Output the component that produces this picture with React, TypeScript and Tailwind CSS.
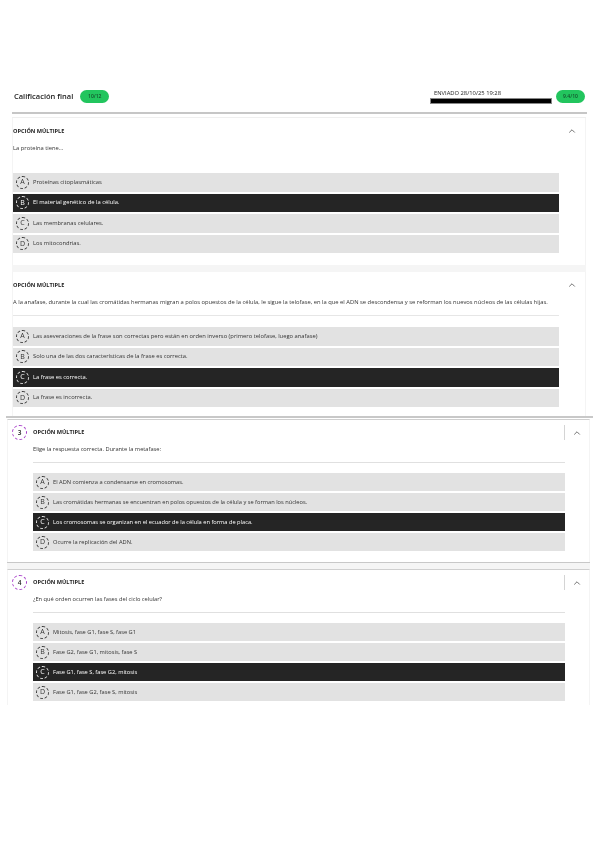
import React from 'react';
import { ChevronUp } from 'lucide-react';

type Question = {
  number?: number;
  text: string;
  options: string[];
  selected: number;
  hideRule?: boolean;
};

const LETTERS = ['A', 'B', 'C', 'D'];

const questions: Question[] = [
  {
    text: 'La proteína tiene...',
    hideRule: true,
    selected: 1,
    options: [
      'Proteínas citoplasmáticas',
      'El material genético de la célula.',
      'Las membranas celulares.',
      'Los mitocondrias.',
    ],
  },
  {
    text: 'A la anafase, durante la cual las cromátidas hermanas migran a polos opuestos de la célula, le sigue la telofase, en la que el ADN se descondensa y se reforman los nuevos núcleos de las células hijas.',
    selected: 2,
    options: [
      'Las aseveraciones de la frase son correctas pero están en orden inverso (primero telofase, luego anafase)',
      'Solo una de las dos características de la frase es correcta.',
      'La frase es correcta.',
      'La frase es incorrecta.',
    ],
  },
  {
    number: 3,
    text: 'Elige la respuesta correcta. Durante la metafase:',
    selected: 2,
    options: [
      'El ADN comienza a condensarse en cromosomas.',
      'Las cromátidas hermanas se encuentran en polos opuestos de la célula y se forman los núcleos.',
      'Los cromosomas se organizan en el ecuador de la célula en forma de placa.',
      'Ocurre la replicación del ADN.',
    ],
  },
  {
    number: 4,
    text: '¿En qué orden ocurren las fases del ciclo celular?',
    selected: 2,
    options: [
      'Mitosis, fase G1, fase S, fase G1',
      'Fase G2, fase G1, mitosis, fase S',
      'Fase G1, fase S, fase G2, mitosis',
      'Fase G1, fase G2, fase S, mitosis',
    ],
  },
];

function ScorePill({ label }: { label: string }) {
  return (
    <span className="flex h-[13px] w-[29px] items-center justify-center rounded-full bg-[#22c55e] text-[5px] font-semibold text-[#14532d]">
      {label}
    </span>
  );
}

function Options({ question, rowClass }: { question: Question; rowClass: string }) {
  return (
    <div className="flex flex-col gap-[2px]">
      {question.options.map((option, i) => {
        const active = i === question.selected;
        return (
          <div
            key={option}
            className={`flex items-center gap-[4px] pl-[3px] ${rowClass} ${
              active ? 'bg-[#252525] text-white' : 'bg-[#e2e2e2] text-[#333333]'
            }`}
          >
            <span
              className={`flex h-[13px] w-[13px] shrink-0 items-center justify-center rounded-full border border-dashed text-[7px] font-medium ${
                active ? 'border-[#eeeeee]' : 'border-[#333333]'
              }`}
            >
              {LETTERS[i]}
            </span>
            <span className="whitespace-nowrap">{option}</span>
          </div>
        );
      })}
    </div>
  );
}

function PlainCard({ question, bottomClass }: { question: Question; bottomClass: string }) {
  return (
    <section className={`ml-[12px] w-[574px] border-x border-[#f4f4f4] pt-[7px] ${bottomClass}`}>
      <div className="flex h-[12px] w-[572px] items-center justify-between pr-[8px]">
        <h3 className="text-[5.6px] font-bold text-[#222222]">OPCIÓN MÚLTIPLE</h3>
        <ChevronUp size={10} strokeWidth={1.8} className="text-[#444444]" />
      </div>
      <div className="w-[546px]">
        <p className="mt-[5px] h-[12px] whitespace-nowrap text-[5.8px] leading-[12px] text-[#333333]">
          {question.text}
        </p>
        <div className={`mt-[7px] h-[1px] ${question.hideRule ? '' : 'bg-[#e6e6e6]'}`} />
        <div className="mt-[11px]">
          <Options question={question} rowClass="h-[18.5px] text-[5.8px]" />
        </div>
      </div>
    </section>
  );
}

function NumberedCard({ question }: { question: Question }) {
  return (
    <section className="ml-[7px] flex w-[583px] border-x border-t border-x-[#f4f4f4] border-t-[#cfcfcf] pl-[4px] pt-[5px]">
      <span className="flex h-[15px] w-[15px] shrink-0 items-center justify-center rounded-full border border-dashed border-[#a83ec9] text-[6.5px] font-semibold text-[#222222]">
        {question.number}
      </span>
      <div className="ml-[6px] w-[532px]">
        <div className="flex h-[15px] items-center border-r border-[#d4d4d4]">
          <h3 className="text-[5.6px] font-bold text-[#222222]">OPCIÓN MÚLTIPLE</h3>
        </div>
        <p className="mt-[3px] h-[12px] whitespace-nowrap text-[5.7px] leading-[12px] text-[#333333]">
          {question.text}
        </p>
        <div className="mt-[7px] h-[1px] bg-[#e0e0e0]" />
        <div className="mt-[10px] pb-[11px]">
          <Options question={question} rowClass="h-[18px] text-[5.7px]" />
        </div>
      </div>
      <div className="ml-[7px] flex h-[15px] items-center">
        <ChevronUp size={10} strokeWidth={1.8} className="text-[#444444]" />
      </div>
    </section>
  );
}

export default function App() {
  return (
    <div className="h-[848px] w-[600px] overflow-hidden bg-white font-['Open_Sans',sans-serif] blur-[0.45px]">
      <div className="h-[705px] overflow-hidden pt-[84px]">
        <header className="ml-[12px] w-[575px] border-b-2 border-[#c6c6c6] pb-[3px]">
          <div className="flex h-[25px] items-center justify-between pl-[2px] pr-[2px]">
            <div className="flex items-center gap-[7px]">
              <h1 className="text-[7.5px] font-semibold text-[#222222]">Calificación final</h1>
              <ScorePill label="10/12" />
            </div>
            <div className="flex items-center gap-[4px]">
              <div className="w-[122px]">
                <p className="h-[9px] pl-[4px] text-[5.8px] leading-[8px] text-[#222222]">
                  ENVIADO 28/10/25 19:28
                </p>
                <div className="h-[6px] border border-[#888888] bg-black" />
              </div>
              <ScorePill label="9.4/10" />
            </div>
          </div>
        </header>

        <div className="ml-[12px] mt-[3px] h-[1px] w-[574px] bg-[#efefef]" />
        <PlainCard question={questions[0]} bottomClass="pb-[12px]" />
        <div className="ml-[12px] h-[7px] w-[574px] bg-[#f5f5f5]" />
        <PlainCard question={questions[1]} bottomClass="pb-[9px]" />

        <div className="ml-[6px] h-[2px] w-[587px] bg-[#c8c8c8]" />
        <div className="mt-[1px]">
          <NumberedCard question={questions[2]} />
        </div>
        <div className="ml-[7px] h-[7px] w-[583px] border-t border-[#c8c8c8] bg-[#f5f5f5]" />
        <NumberedCard question={questions[3]} />
      </div>
    </div>
  );
}
